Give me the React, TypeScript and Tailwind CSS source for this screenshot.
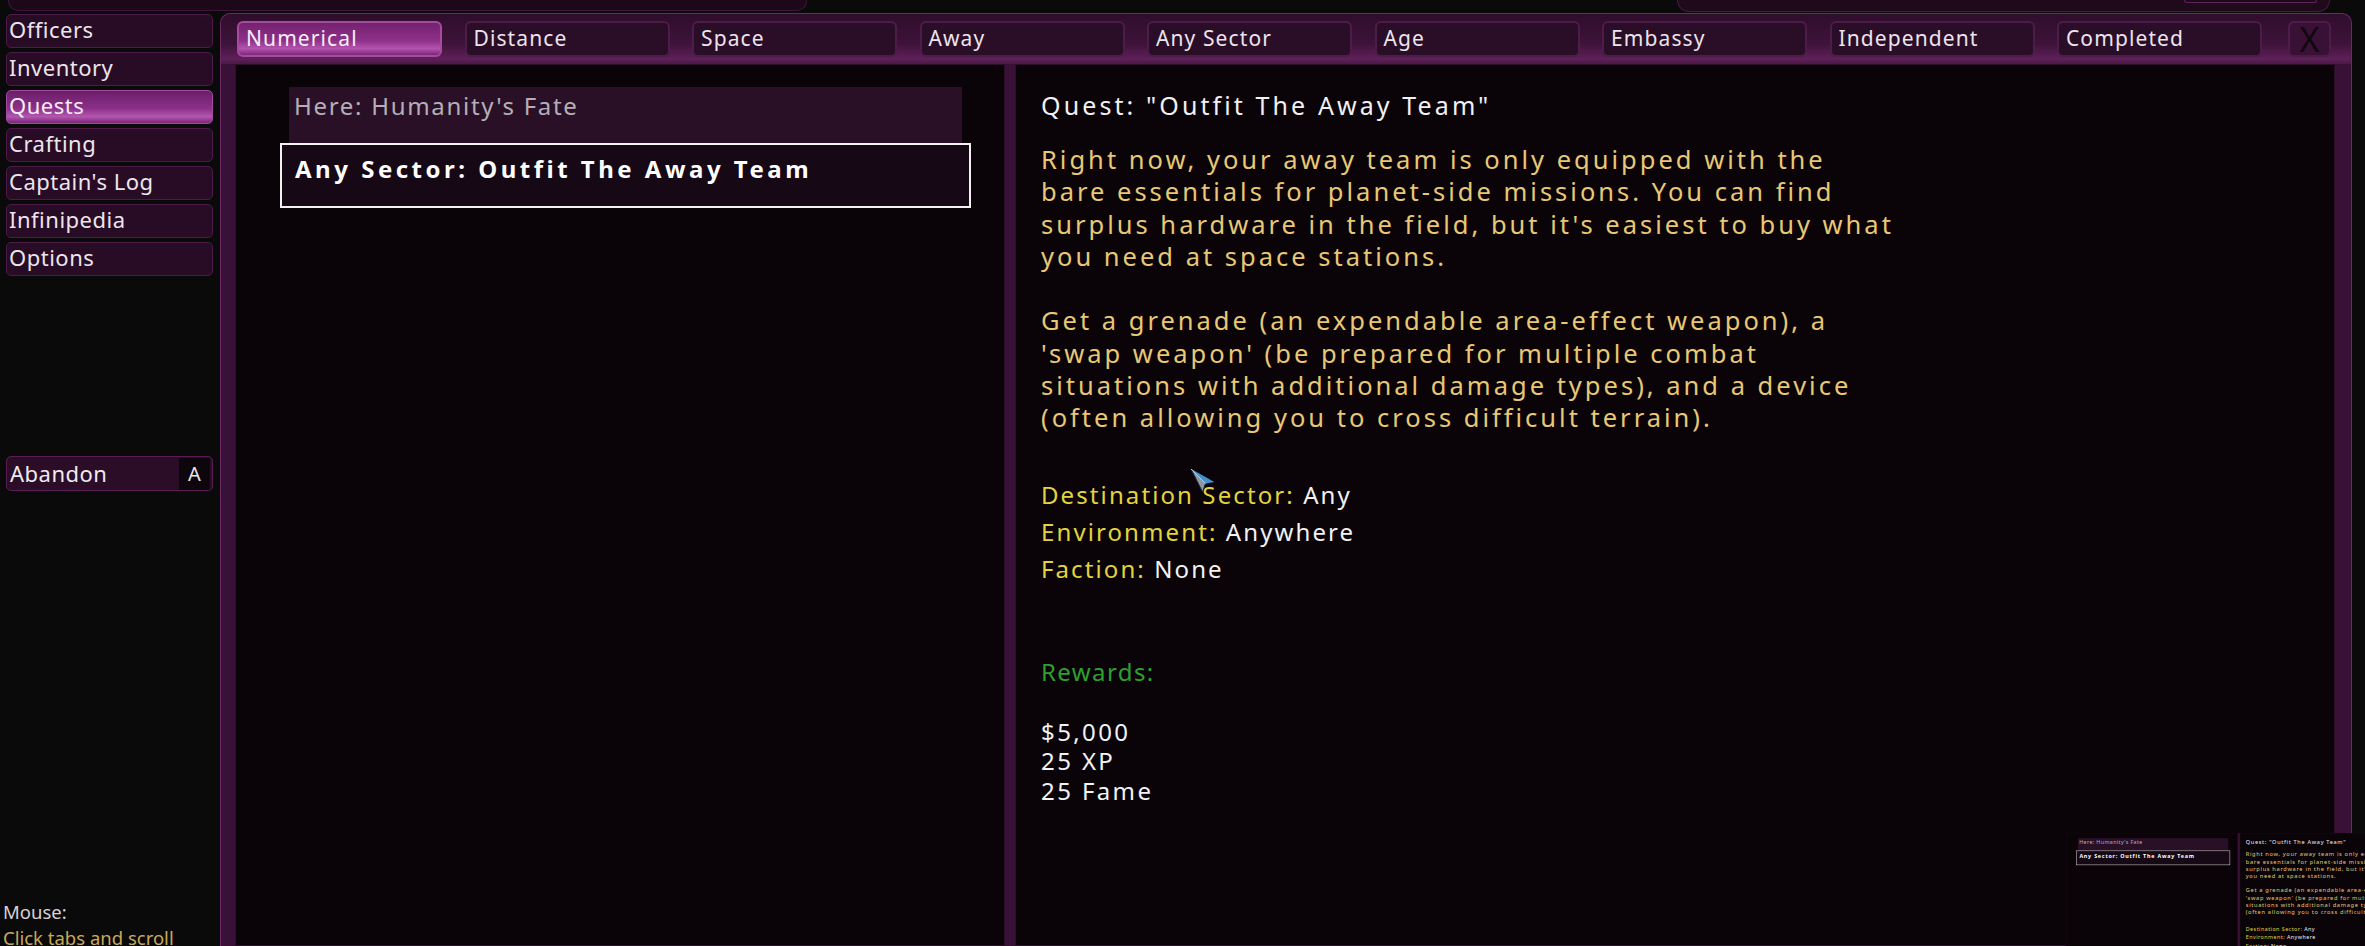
import React from "react";

const menu = ["Officers", "Inventory", "Quests", "Crafting", "Captain's Log", "Infinipedia", "Options"];
const tabs = ["Numerical", "Distance", "Space", "Away", "Any Sector", "Age", "Embassy", "Independent", "Completed"];

const para1 = [
  "Right now, your away team is only equipped with the",
  "bare essentials for planet-side missions. You can find",
  "surplus hardware in the field, but it's easiest to buy what",
  "you need at space stations.",
];
const para2 = [
  "Get a grenade (an expendable area-effect weapon), a",
  "'swap weapon' (be prepared for multiple combat",
  "situations with additional damage types), and a device",
  "(often allowing you to cross difficult terrain).",
];

function SideButton({ label, active }: { label: string; active?: boolean }) {
  return (
    <div
      className={
        active
          ? "h-[34px] w-[207px] rounded-[5px] border border-[#a24a9f] bg-[linear-gradient(to_bottom,#6c1e69,#8c3089_55%,#b257af_80%,#7a2676)] pl-[2px] pb-[4px] flex items-center text-[22px] tracking-[0.5px] text-[#f6eef6]"
          : "h-[34px] w-[207px] rounded-[5px] border border-[#4c1b47] bg-[#280c25] pl-[2px] pb-[4px] flex items-center text-[22px] tracking-[0.5px] text-[#ece6ec]"
      }
    >
      {label}
    </div>
  );
}

function Tab({ label, active }: { label: string; active?: boolean }) {
  return (
    <div
      className={
        active
          ? "w-[205px] h-[36px] shrink-0 rounded-[6px] border-2 border-[#a54a9f] bg-[linear-gradient(to_bottom,#74226f,#8e3089_55%,#b454b0_80%,#7c2777)] pl-[7px] flex items-center text-[21px] tracking-[1.1px] text-[#f6eef6]"
          : "w-[205px] h-[36px] shrink-0 rounded-[6px] border-2 border-[#4e1c49] bg-[#2a0d27] pl-[7px] flex items-center text-[21px] tracking-[1.1px] text-[#ece4ec]"
      }
    >
      {label}
    </div>
  );
}

function QuestList() {
  return (
    <div className="w-[770px] shrink-0 bg-[#0a0409] border border-[#2b0f28] pt-[22px] pl-[53px]">
      <div className="w-[673px]">
        <div className="h-[56px] bg-[#2a1027] pl-[5px] pt-[2px] text-[24px] leading-[34px] tracking-[1.7px] text-[#b6aeb6] whitespace-nowrap">
          Here: Humanity's Fate
        </div>
        <div className="-mx-[9px] h-[65px] border-2 border-[#f2f2f2] bg-[#170815] pl-[13px] pt-[7px] text-[24px] leading-[34px] font-bold tracking-[3.5px] text-white whitespace-nowrap">
          Any Sector: Outfit The Away Team
        </div>
      </div>
    </div>
  );
}

function QuestDetail() {
  return (
    <div className="flex-1 bg-[#0a0409] border border-[#2b0f28] pl-[25px] pt-[24px] whitespace-nowrap">
      <div className="text-[25px] leading-[32px] tracking-[3.1px] text-[#f2f0f2]">Quest: "Outfit The Away Team"</div>
      <div className="mt-[22px] text-[25.5px] leading-[32.3px] tracking-[3px] text-[#e8c874]">
        {para1.map((l) => (
          <div key={l}>{l}</div>
        ))}
        <div className="h-[32.3px]" />
        {para2.map((l) => (
          <div key={l}>{l}</div>
        ))}
      </div>
      <div className="mt-[42px] text-[24px] leading-[37px] tracking-[2.1px] text-[#f2f2f2]">
        <div>
          <span className="text-[#e2d43c]">Destination Sector:</span> Any
        </div>
        <div>
          <span className="text-[#e2d43c]">Environment:</span> Anywhere
        </div>
        <div>
          <span className="text-[#e2d43c]">Faction:</span> None
        </div>
      </div>
      <div className="mt-[70px] text-[24px] leading-[30px] tracking-[1.4px] text-[#2f9f2f]">Rewards:</div>
      <div className="mt-[30px] text-[24px] leading-[29.6px] tracking-[2.4px] text-[#f2f2f2]">
        <div>$5,000</div>
        <div>25 XP</div>
        <div>25 Fame</div>
      </div>
    </div>
  );
}

function Cursor() {
  return (
    <svg width="28" height="28" viewBox="0 0 28 28">
      <path d="M1 1 L24 14 L15.5 15.5 L12.5 24 Z" fill="#8c98a4" stroke="#1c2530" strokeWidth="1" />
      <path d="M1 1 L24 14 L15.5 15.5 Z" fill="#3f93d2" />
      <path d="M1 1 L15.5 15.5" stroke="#a9d4f2" strokeWidth="1" />
    </svg>
  );
}

export default function App() {
  return (
    <div className="relative w-[2365px] h-[946px] overflow-hidden bg-[#0b0a0b] font-['Noto_Sans',sans-serif]">
      {/* top strip */}
      <div className="h-[13px] flex">
        <div className="ml-[8px] w-[799px] h-[11px] rounded-b-[10px] border-x border-b border-[#3e1639] bg-[#1c0819]" />
        <div className="ml-[870px] w-[653px] h-[12px] rounded-b-[12px] border-x border-b border-[#4a1a45] bg-[#1e0a1b] flex justify-end pr-[12px]">
          <div className="w-[133px] h-[3px] rounded-b-[4px] border-x border-b border-[#5a2356]" />
        </div>
      </div>

      <div className="flex h-[933px]">
        {/* sidebar */}
        <div className="w-[220px] shrink-0 flex flex-col pl-[6px] pt-[1px]">
          <div className="flex flex-col gap-[4px]">
            {menu.map((m) => (
              <SideButton key={m} label={m} active={m === "Quests"} />
            ))}
          </div>
          <div className="mt-[180px] h-[36px] w-[207px] rounded-[5px] border border-[#5a1d55] bg-[#2b0d27] flex items-center">
            <div className="flex-1 pl-[3px] text-[22px] tracking-[0.5px] text-[#f0eaf0]">Abandon</div>
            <div className="w-[31px] h-[32px] mr-[2px] bg-[#0d060c] flex items-center justify-center text-[20px] text-[#ece6ec]">A</div>
          </div>
          <div className="mt-[408px] -ml-[3px] text-[18.5px] leading-[26px] whitespace-nowrap">
            <div className="text-[#d6d2d6]">Mouse:</div>
            <div className="text-[#c8a85a]">Click tabs and scroll</div>
          </div>
        </div>

        {/* main frame */}
        <div className="w-[2132px] shrink-0 flex flex-col rounded-t-[10px] border-t border-x border-[#6b2a66] bg-[#3a1136]">
          <div className="h-[50px] shrink-0 flex items-start gap-[22.5px] pt-[7px] pl-[16px] rounded-t-[10px] bg-[linear-gradient(to_bottom,#2f0d2c,#3e133a_60%,#5e2059_90%,#4a1846)]">
            {tabs.map((t) => (
              <Tab key={t} label={t} active={t === "Numerical"} />
            ))}
            <div className="ml-[3.5px] w-[43px] h-[36px] shrink-0 rounded-[6px] border-2 border-[#4e1c49] bg-[#3a1136] flex items-center justify-center text-[34px] leading-none text-[#12060f]">
              X
            </div>
          </div>
          <div className="flex-1 flex gap-[10px] pl-[14px] pr-[16px]">
            <QuestList />
            <QuestDetail />
          </div>
        </div>
      </div>

      {/* mouse pointer */}
      <div className="absolute left-[1190px] top-[468px]">
        <Cursor />
      </div>

      {/* preview thumbnail */}
      <div className="absolute left-[2066px] top-[833px] w-[299px] h-[113px] overflow-hidden bg-[#060306]">
        <div className="w-[2100px] h-[510px] flex gap-[10px] bg-[#3a1136] origin-top-left scale-[0.223]">
          <QuestList />
          <QuestDetail />
        </div>
      </div>
    </div>
  );
}
